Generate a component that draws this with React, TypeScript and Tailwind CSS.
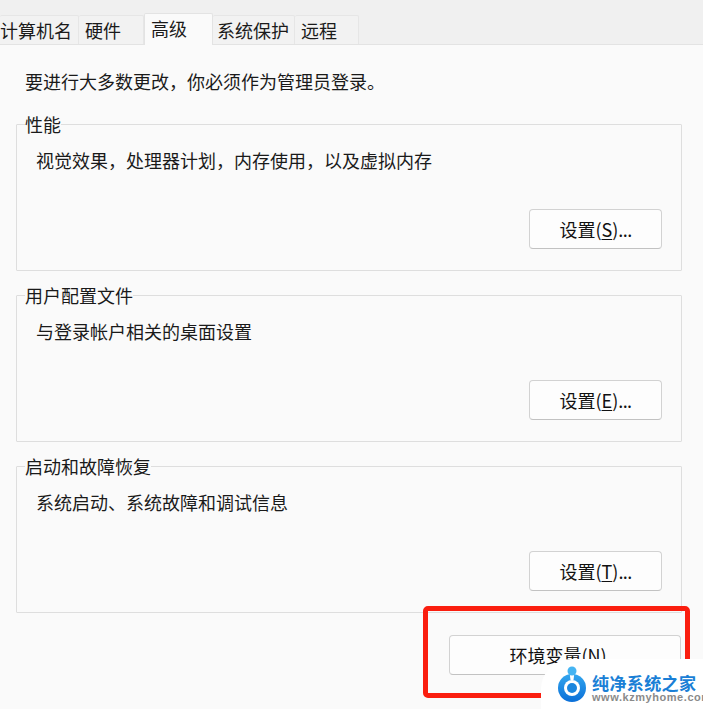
const FONT = "font-['Noto_Sans_CJK_SC','Microsoft_YaHei',sans-serif]";

function Tab({ label, width, pad, active }: { label: string; width: string; pad: string; active?: boolean }) {
  if (active) {
    return (
      <div className={`${width} ${pad} h-[32px] -mb-px bg-[#fafafa] border border-b-0 border-[#e3e3e3] rounded-t-[2px] leading-[28px] text-[18px] text-[#1a1a1a] z-10`}>
        {label}
      </div>
    );
  }
  return (
    <div className={`${width} ${pad} h-[29px] bg-[#f2f2f2] border border-b-0 border-l-0 border-[#e6e6e6] rounded-t-[2px] leading-[29px] whitespace-nowrap text-[18px] text-[#1a1a1a]`}>
      {label}
    </div>
  );
}

function SettingButton({ label, hotkey, wide }: { label: string; hotkey: string; wide?: boolean }) {
  return (
    <div className={`${wide ? "w-[232px] pr-[14px]" : "w-[133px]"} h-[40px] bg-[#fdfdfd] border border-[#d2d2d2] border-b-[#c2c2c2] rounded-[4px] flex items-center justify-center text-[18px] leading-[24px] text-[#111]`}>
      <span>
        {label}(<span className="underline underline-offset-2">{hotkey}</span>)
        {wide ? "" : <span className="tracking-[-0.6px]">...</span>}
      </span>
    </div>
  );
}

function Group({ title, text, hotkey }: { title: string; text: string; hotkey: string }) {
  return (
    <fieldset className="border border-[#dedede] rounded-[1px] px-[19px] pt-[13px] pb-[20px] h-[158px] min-w-0">
      <legend className="-ml-[11px] text-[18px] leading-[22px] text-[#1a1a1a]">{title}</legend>
      <p className="text-[18px] leading-[24px] text-[#1a1a1a]">{text}</p>
      <div className="mt-[37px] flex justify-end">
        <SettingButton label="设置" hotkey={hotkey} />
      </div>
    </fieldset>
  );
}

export default function App() {
  return (
    <div className={`${FONT} relative w-[703px] h-[709px] overflow-hidden bg-[#fafafa]`}>
      <div className="h-[45px] bg-[#f0f0f0] border-b border-[#e3e3e3] flex items-end">
        <Tab label="计算机名" width="w-[79px]" pad="pl-0" />
        <Tab label="硬件" width="w-[65px]" pad="pl-[6px]" />
        <Tab label="高级" width="w-[69px]" pad="pl-[6px]" active />
        <Tab label="系统保护" width="w-[82px]" pad="pl-[4px]" />
        <Tab label="远程" width="w-[64px]" pad="pl-[6px]" />
      </div>

      <div className="pl-[16px] pr-[21px] pt-[24px]">
        <p className="pl-[9px] text-[18px] leading-[24px] text-[#1a1a1a]">要进行大多数更改，你必须作为管理员登录。</p>
        <div className="mt-[20px] flex flex-col gap-[13px]">
          <Group title="性能" text="视觉效果，处理器计划，内存使用，以及虚拟内存" hotkey="S" />
          <Group title="用户配置文件" text="与登录帐户相关的桌面设置" hotkey="E" />
          <Group title="启动和故障恢复" text="系统启动、系统故障和调试信息" hotkey="T" />
        </div>
        <div className="mt-[22px] flex justify-end pr-px">
          <SettingButton label="环境变量" hotkey="N" wide />
        </div>
      </div>

      <div className="absolute left-[423px] top-[606px] w-[267px] h-[92px] border-[5px] border-[#fa1e0f] rounded-[5px]" />

      <div className="absolute left-[541px] top-[659px] w-[162px] h-[50px] bg-white rounded-tl-[30px] flex items-start">
        <svg width="32" height="50" viewBox="0 0 32 50" className="ml-[15px] shrink-0">
          <defs>
            <linearGradient id="ring" x1="0" y1="0" x2="0" y2="1">
              <stop offset="0" stopColor="#33a6ee" />
              <stop offset="1" stopColor="#0a6fd8" />
            </linearGradient>
          </defs>
          <circle cx="16" cy="29" r="14" fill="url(#ring)" />
          <circle cx="16" cy="29" r="8" fill="#ffffff" />
          <circle cx="16" cy="29" r="5" fill="#1a86de" />
          <path d="M13.5 13 L18.5 13 L17.5 21 L14.5 21 Z" fill="#ffffff" />
          <circle cx="16" cy="12" r="4.5" fill="#45b4f2" />
        </svg>
        <div className="ml-[4px] mt-[16px] flex flex-col w-[110px]">
          <span className="text-[17px] leading-[16px] tracking-[0.4px] font-bold text-[#1a7fd6] whitespace-nowrap">纯净系统之家</span>
          <span className="font-['Liberation_Sans',sans-serif] text-[11px] leading-[13px] tracking-[0.55px] font-bold text-[#8a8a8a] whitespace-nowrap">www.kzmyhome.com</span>
        </div>
      </div>
    </div>
  );
}
